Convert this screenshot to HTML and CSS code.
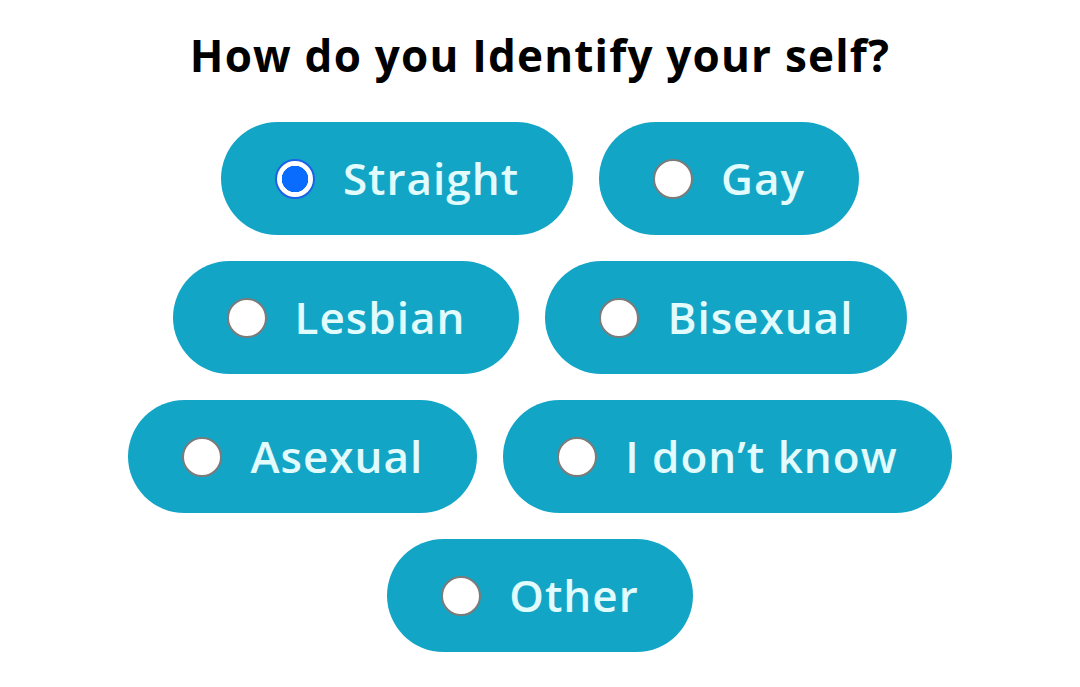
FILE: index.html
```html
<!DOCTYPE html>
<html>
<head>
<meta charset="utf-8">
<link rel="stylesheet" href="styles.css">
</head>
<body>
<main class="page">
  <h1 class="title">How do you Identify your self?</h1>
  <div class="options">
    <div class="row">
      <label class="pill"><input type="radio" name="id" class="radio" checked><span class="label">Straight</span></label>
      <label class="pill"><input type="radio" name="id" class="radio"><span class="label">Gay</span></label>
    </div>
    <div class="row">
      <label class="pill"><input type="radio" name="id" class="radio"><span class="label">Lesbian</span></label>
      <label class="pill"><input type="radio" name="id" class="radio"><span class="label">Bisexual</span></label>
    </div>
    <div class="row">
      <label class="pill"><input type="radio" name="id" class="radio"><span class="label">Asexual</span></label>
      <label class="pill"><input type="radio" name="id" class="radio"><span class="label">I don’t know</span></label>
    </div>
    <div class="row">
      <label class="pill"><input type="radio" name="id" class="radio"><span class="label">Other</span></label>
    </div>
  </div>
</main>
</body>
</html>
```
FILE: styles.css
```css
html, body {
  margin: 0;
  padding: 0;
  background: #ffffff;
}
.page {
  width: 1080px;
  height: 687px;
  font-family: "Open Sans", "Noto Sans", sans-serif;
  display: flex;
  flex-direction: column;
  align-items: center;
}
.title {
  margin: 26px 0 0 0;
  font-size: 44px;
  line-height: 58px;
  font-weight: 700;
  color: #000000;
  letter-spacing: 1.2px;
}
.options {
  margin-top: 38px;
  display: flex;
  flex-direction: column;
  gap: 26px;
  align-items: center;
}
.row {
  display: flex;
  gap: 26px;
  justify-content: center;
}
.pill {
  height: 113px;
  box-sizing: border-box;
  padding: 0 54px;
  border-radius: 57px;
  background: #13a5c6;
  display: flex;
  align-items: center;
  gap: 28px;
}
.radio {
  appearance: none;
  -webkit-appearance: none;
  margin: 0;
  width: 40px;
  height: 40px;
  box-sizing: border-box;
  border-radius: 50%;
  border: 2px solid #7b7b7b;
  background: #ffffff;
  flex: none;
}
.radio:checked {
  border: 2px solid #1a63e8;
  background: radial-gradient(circle, #0a6cff 0 13px, #ffffff 13.5px);
}
.label {
  font-size: 44px;
  font-weight: 600;
  color: #e2fbfd;
  letter-spacing: 1px;
  line-height: 1;
  padding-bottom: 2px;
}
```
